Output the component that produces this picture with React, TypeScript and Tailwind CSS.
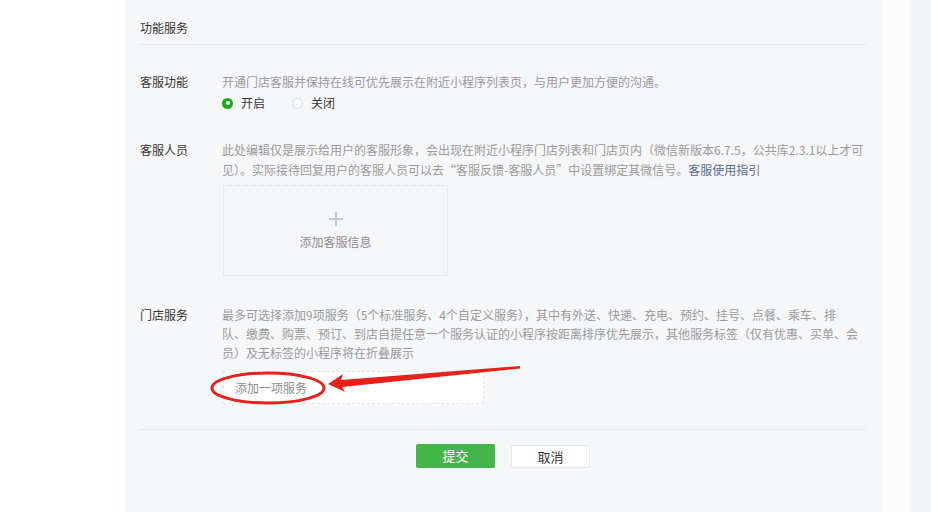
import React from "react";

const font = { fontFamily: '"Noto Sans CJK SC", "Microsoft YaHei", "Noto Sans", sans-serif' };

export default function App() {
  return (
    <div className="relative flex h-[512px] w-[931px] overflow-hidden bg-white text-[12px]" style={font}>
      <div className="w-[125px] shrink-0 bg-white" />
      <div className="flex w-[756px] shrink-0 flex-col bg-[#f6f7f9] px-[15px]">
        {/* title */}
        <div className="border-b border-[#e4e8eb] pb-[6px] pt-[18px] leading-[20px] text-[#353535]">功能服务</div>

        {/* row 1 */}
        <div className="mt-[27px] flex">
          <div className="w-[82px] shrink-0 leading-[20px] text-[#353535]">客服功能</div>
          <div className="flex flex-col">
            <div className="leading-[20px] text-[#9a9a9a]">开通门店客服并保持在线可优先展示在附近小程序列表页，与用户更加方便的沟通。</div>
            <div className="mt-[1px] flex h-[20px] items-center">
              <span className="flex h-[11px] w-[11px] items-center justify-center rounded-full bg-[#1aad19]">
                <span className="h-[4px] w-[4px] rounded-full bg-white" />
              </span>
              <span className="ml-[8px] text-[#353535]">开启</span>
              <span className="ml-[27px] h-[11px] w-[11px] rounded-full border border-[#d9dadc] bg-white" />
              <span className="ml-[8px] text-[#353535]">关闭</span>
            </div>
          </div>
        </div>

        {/* row 2 */}
        <div className="mt-[27px] flex">
          <div className="w-[82px] shrink-0 leading-[20px] text-[#353535]">客服人员</div>
          <div className="flex flex-col">
            <div className="leading-[20px] text-[#9a9a9a]">
              此处编辑仅是展示给用户的客服形象，会出现在附近小程序门店列表和门店页内（微信新版本6.7.5，公共库2.3.1以上才可
              <br />
              见）。实际接待回复用户的客服人员可以去“客服反馈-客服人员”中设置绑定其微信号。
              <span className="text-[#576b95]">客服使用指引</span>
            </div>
            <div className="ml-[1px] mt-[5px] flex h-[91px] w-[225px] flex-col items-center justify-center border border-dotted border-[#dcdcdc]">
              <svg width="14" height="14" viewBox="0 0 14 14" className="mt-[2px]">
                <rect x="6" y="0" width="2" height="14" fill="#c9c9c9" />
                <rect x="0" y="6" width="14" height="2" fill="#c9c9c9" />
              </svg>
              <div className="mt-[6px] leading-[20px] text-[#8d8d8d]">添加客服信息</div>
            </div>
          </div>
        </div>

        {/* row 3 */}
        <div className="mt-[29px] flex">
          <div className="w-[82px] shrink-0 leading-[19px] text-[#353535]">门店服务</div>
          <div className="flex flex-col">
            <div className="leading-[19px] text-[#9a9a9a]">
              最多可选择添加9项服务（5个标准服务、4个自定义服务），其中有外送、快递、充电、预约、挂号、点餐、乘车、排
              <br />
              队、缴费、购票、预订、到店自提任意一个服务认证的小程序按距离排序优先展示，其他服务标签（仅有优惠、买单、会
              <br />
              员）及无标签的小程序将在折叠展示
            </div>
            <div className="ml-[1px] mt-[9px] flex h-[33px] w-[261px] items-center border border-dashed border-[#e4e6ea] bg-white pl-[11px] text-[#8d8d8d]">
              添加一项服务
            </div>
          </div>
        </div>

        {/* footer */}
        <div className="mt-[25px] border-t border-[#e4e8eb]" />
        <div className="mt-[14px] flex justify-center gap-[16px]">
          <button className="h-[24px] w-[79px] rounded-[2px] bg-[#44b549] text-[13px] text-white">提交</button>
          <button className="mt-[1px] h-[23px] w-[79px] rounded-[2px] border border-[#e4e8eb] bg-white text-[13px] text-[#353535]">取消</button>
        </div>
      </div>
      <div className="w-[30px] shrink-0 bg-[#fbfbfc]" />
      <div className="flex-1 bg-[#f4f5f7]" />

      {/* annotation */}
      <svg className="pointer-events-none absolute left-0 top-0" width="931" height="512" viewBox="0 0 931 512">
        <ellipse cx="268" cy="388" rx="56" ry="15" fill="none" stroke="#e8211c" strokeWidth="3" />
        <polygon
          points="328,384 343,374 341,380 520,366 520,368.5 342,387 345,392"
          fill="#e8211c"
        />
      </svg>
    </div>
  );
}
